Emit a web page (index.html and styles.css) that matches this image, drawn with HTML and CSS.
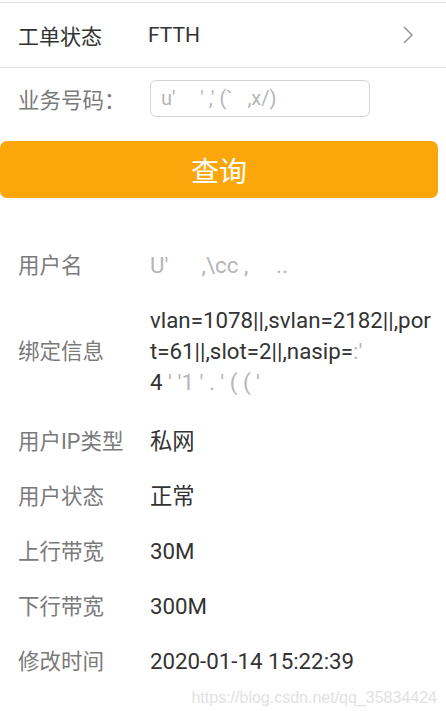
FILE: index.html
```html
<!DOCTYPE html>
<html lang="zh-CN">
<head>
  <meta charset="UTF-8" />
  <meta name="viewport" content="width=device-width, initial-scale=1.0"/>
  <title>工单查询</title>
  <link rel="stylesheet" href="styles.css">
</head>
<body>

  <div class="linha linha-status">
    <span class="rotulo-forte">工单状态</span>
    <span class="valor-status">FTTH</span>
    <svg class="seta" width="12" height="20" viewBox="0 0 12 20">
      <path d="M2 2 L10 10 L2 18" fill="none" stroke="#9a9a9a" stroke-width="1.6"/>
    </svg>
  </div>

  <div class="linha linha-busca">
    <span class="rotulo">业务号码：</span>
    <div class="campo"><span class="borrado">u'&nbsp;&nbsp;&nbsp;&nbsp; ' ,' (`&nbsp;&nbsp; ,x/)</span></div>
  </div>

  <button class="botao">查询</button>

  <div class="info">
    <div class="item">
      <span class="rotulo">用户名</span>
      <span class="valor"><span class="borrado">U'&nbsp;&nbsp;&nbsp;&nbsp;&nbsp; ,\cc ,&nbsp;&nbsp;&nbsp;&nbsp; ..</span></span>
    </div>
    <div class="item item-longo">
      <span class="rotulo">绑定信息</span>
      <div class="valor">
        <div>vlan=1078||,svlan=2182||,por</div>
        <div>t=61||,slot=2||,nasip=<span class="borrado">:'</span></div>
        <div>4<span class="borrado"> ' '1 ' . ' ( ( '</span></div>
      </div>
    </div>
    <div class="item">
      <span class="rotulo">用户IP类型</span>
      <span class="valor">私网</span>
    </div>
    <div class="item">
      <span class="rotulo">用户状态</span>
      <span class="valor">正常</span>
    </div>
    <div class="item">
      <span class="rotulo">上行带宽</span>
      <span class="valor">30M</span>
    </div>
    <div class="item">
      <span class="rotulo">下行带宽</span>
      <span class="valor">300M</span>
    </div>
    <div class="item">
      <span class="rotulo">修改时间</span>
      <span class="valor">2020-01-14 15:22:39</span>
    </div>
  </div>

  <div class="marca">https://blog.csdn.net/qq_35834424</div>

</body>
</html>
```

FILE: styles.css
```css
body {
  margin: 0;
  background-color: #fff;
  font-family: Roboto, "Noto Sans CJK SC", sans-serif;
  font-size: 21px;
  color: #333;
  overflow: hidden;
}

.linha {
  display: flex;
  align-items: center;
  padding: 0 18px;
}

.linha-status {
  margin-top: 2px;
  height: 64px;
  border-top: 1px solid #e2e2e2;
  border-bottom: 1px solid #e2e2e2;
  padding-right: 32px;
}

.rotulo-forte {
  width: 130px;
  color: #333;
}

.valor-status {
  flex: 1;
  font-size: 21px;
}

.seta {
  display: block;
}

.linha-busca {
  height: 60px;
}

.rotulo {
  width: 132px;
  flex-shrink: 0;
  color: #7a7a7a;
  font-size: 21.5px;
}

.campo {
  width: 220px;
  height: 37px;
  border: 1px solid #d4d4d4;
  border-radius: 6px;
  display: flex;
  align-items: center;
  padding-left: 10px;
  box-sizing: border-box;
  overflow: hidden;
  white-space: nowrap;
  font-size: 20px;
}

.borrado {
  color: #b5b5b5;
}

.botao {
  display: block;
  margin: 13px 8px 0 0;
  width: 438px;
  height: 57px;
  border: none;
  border-radius: 7px;
  background-color: #fba70c;
  color: #fff;
  font-family: "Noto Sans CJK SC", sans-serif;
  font-size: 28px;
  cursor: pointer;
}

.info {
  margin-top: 40px;
}

.item {
  display: flex;
  align-items: center;
  padding: 12px 10px 12px 18px;
  line-height: 31px;
}

.item-longo {
  padding-bottom: 16px;
}

.valor {
  flex: 1;
  color: #333;
  font-size: 22.3px;
  white-space: nowrap;
}

.marca {
  text-align: right;
  padding-right: 9px;
  font-family: "Liberation Sans", sans-serif;
  font-size: 16px;
  color: #e2e2e2;
}
```
